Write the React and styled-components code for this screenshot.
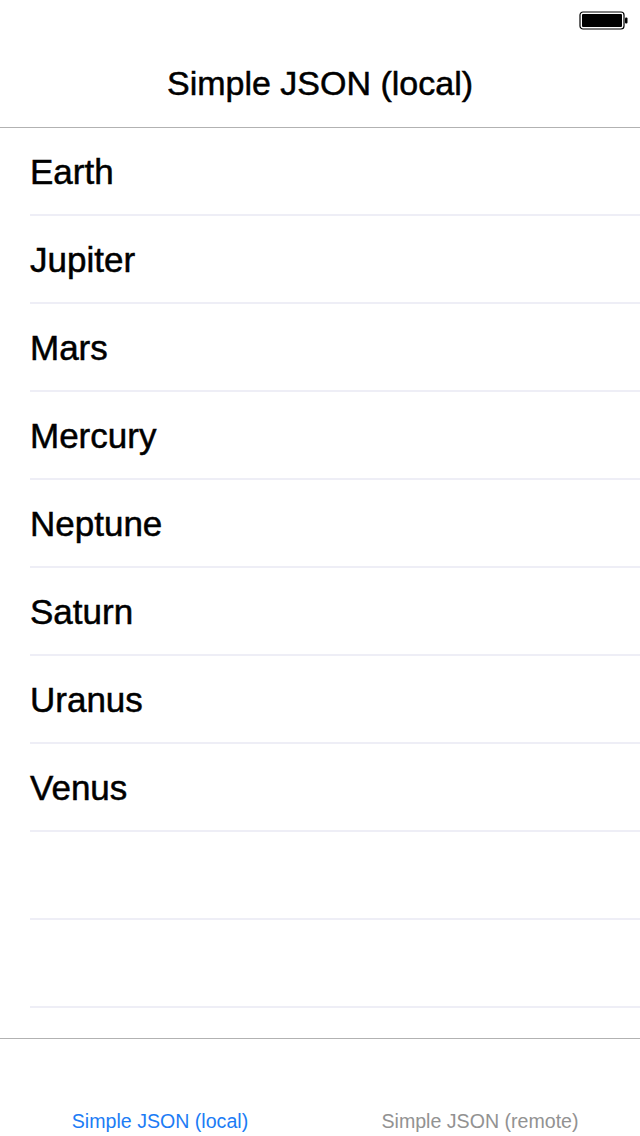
import styled, { createGlobalStyle } from "styled-components";

const GlobalStyle = createGlobalStyle`
  body {
    margin: 0;
    background: #ffffff;
    font-family: "Liberation Sans", Arial, sans-serif;
  }
`;

const Screen = styled.div`
  width: 640px;
  height: 1136px;
  display: flex;
  flex-direction: column;
  overflow: hidden;
  background: #fff;
`;

const StatusBar = styled.div`
  height: 40px;
  display: flex;
  align-items: flex-start;
  justify-content: flex-end;
  padding: 11px 11px 0 0;
  box-sizing: border-box;
`;

const NavBar = styled.div`
  height: 88px;
  border-bottom: 1px solid #b2b2b2;
  display: flex;
  align-items: center;
  justify-content: center;
  box-sizing: border-box;
`;

const Title = styled.h1`
  margin: 0;
  font-size: 34px;
  font-weight: normal;
  color: #000;
  -webkit-text-stroke: 0.5px #000;
`;

const List = styled.div`
  flex: 1;
  display: flex;
  flex-direction: column;
`;

const Row = styled.div`
  height: 88px;
  margin-left: 30px;
  border-bottom: 2px solid #eeeef6;
  box-sizing: border-box;
  display: flex;
  align-items: center;
  padding-top: 2px;
  font-size: 35px;
  color: #000;
  -webkit-text-stroke: 0.5px #000;
`;

const TabBar = styled.div`
  height: 98px;
  border-top: 1px solid #b2b2b2;
  display: flex;
  box-sizing: border-box;
`;

const Tab = styled.div`
  flex: 1;
  display: flex;
  align-items: flex-end;
  justify-content: center;
  padding-bottom: 3px;
  font-size: 19.6px;
  color: ${(p) => (p.$active ? "#1c7cf5" : "#929292")};
`;

const Battery = () => (
  <svg width="50" height="20" viewBox="0 0 50 20">
    <rect x="1" y="1" width="44" height="17" rx="3" fill="#fff" stroke="#000" strokeWidth="1.2" />
    <rect x="3" y="3" width="40" height="13" rx="1" fill="#000" />
    <rect x="46" y="6.5" width="2.5" height="6" rx="1" fill="#000" />
  </svg>
);

const planets = ["Earth", "Jupiter", "Mars", "Mercury", "Neptune", "Saturn", "Uranus", "Venus", "", ""];

export default function App() {
  return (
    <Screen>
      <GlobalStyle />
      <StatusBar>
        <Battery />
      </StatusBar>
      <NavBar>
        <Title>Simple JSON (local)</Title>
      </NavBar>
      <List>
        {planets.map((name, i) => (
          <Row key={i}>{name}</Row>
        ))}
      </List>
      <TabBar>
        <Tab $active>Simple JSON (local)</Tab>
        <Tab>Simple JSON (remote)</Tab>
      </TabBar>
    </Screen>
  );
}
